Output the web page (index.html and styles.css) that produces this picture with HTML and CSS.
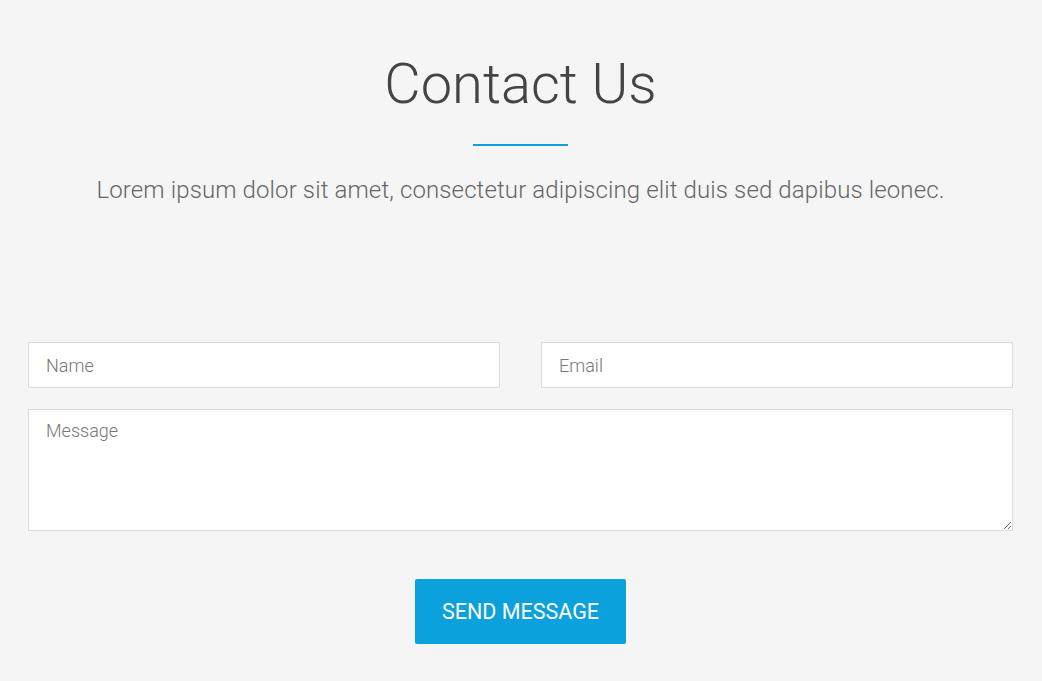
FILE: index.html
```html
<!DOCTYPE html>
<html lang="en">
<head>
<meta charset="utf-8">
<title>Contact Us</title>
<link rel="stylesheet" href="styles.css">
</head>
<body>
<section class="contact">
  <header class="contact-head">
    <h1 class="contact-title">Contact Us</h1>
    <div class="contact-rule"></div>
    <p class="contact-lead">Lorem ipsum dolor sit amet, consectetur adipiscing elit duis sed dapibus leonec.</p>
  </header>
  <form class="contact-form">
    <div class="form-row">
      <input class="field" type="text" placeholder="Name">
      <input class="field" type="email" placeholder="Email">
    </div>
    <textarea class="field field-message" placeholder="Message"></textarea>
    <div class="form-actions">
      <button class="send-btn" type="button">SEND MESSAGE</button>
    </div>
  </form>
</section>
</body>
</html>
```
FILE: styles.css
```css
* { box-sizing: border-box; }
html, body { margin: 0; padding: 0; }
body {
  background: #f5f5f5;
  font-family: Roboto, "Liberation Sans", sans-serif;
  color: #444;
}
.contact {
  padding: 48px 29px 0 28px;
}
.contact-head {
  text-align: center;
}
.contact-title {
  margin: 0;
  font-size: 56px;
  font-weight: 300;
  line-height: 72px;
  color: #444;
}
.contact-rule {
  width: 95px;
  height: 2px;
  background: #0ba1dc;
  margin: 24px auto 0 auto;
}
.contact-lead {
  margin: 29px 0 0 0;
  font-size: 24px;
  letter-spacing: 0.12px;
  font-weight: 300;
  line-height: 30px;
  color: #666;
}
.contact-form {
  margin-top: 137px;
  display: flex;
  flex-direction: column;
  gap: 21px;
}
.form-row {
  display: grid;
  grid-template-columns: 1fr 1fr;
  gap: 41px;
}
.field {
  display: block;
  width: 100%;
  height: 46px;
  padding: 0 17px;
  border: 1px solid #dcdcdc;
  border-radius: 0;
  background: #fff;
  font-family: Roboto, "Liberation Sans", sans-serif;
  font-size: 18px;
  font-weight: 300;
  color: #555;
  outline: none;
}
.field::placeholder {
  color: #777;
  opacity: 1;
}
.field-message {
  height: 122px;
  padding: 10px 17px;
  resize: vertical;
}
.form-actions {
  display: flex;
  justify-content: center;
  margin-top: 27px;
}
.send-btn {
  width: 211px;
  height: 65px;
  border: none;
  border-radius: 2px;
  background: #0ba1dc;
  color: #fff;
  font-family: Roboto, "Liberation Sans", sans-serif;
  font-size: 21.5px;
  font-weight: 400;
  cursor: pointer;
}
```
